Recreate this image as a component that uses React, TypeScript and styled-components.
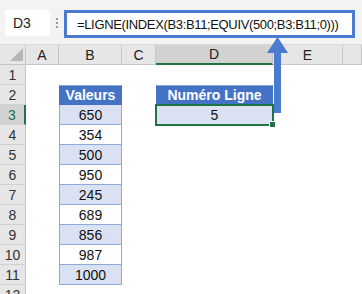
import React from 'react';
import styled, { createGlobalStyle } from 'styled-components';

const GlobalStyle = createGlobalStyle`
  html, body {
    margin: 0;
    padding: 0;
    background: #ffffff;
  }
`;

const BLUE = '#4472c4';
const ACCENT = '#4a7bcf';
const LIGHT = '#d9e1f2';
const TABLE_LINE = '#8eaadb';
const GREEN = '#217346';

const Screen = styled.div`
  position: relative;
  width: 362px;
  height: 294px;
  overflow: hidden;
  background: #ffffff;
  font-family: "Liberation Sans", Arial, sans-serif;
`;

const Toolbar = styled.div`
  height: 45px;
  box-sizing: border-box;
  background: #f3f3f3;
  display: flex;
  align-items: flex-start;
  padding: 10px 0 0 5px;
  border-bottom: 1px solid #dadada;
`;

const NameBox = styled.div`
  width: 45px;
  height: 26px;
  box-sizing: border-box;
  background: #ffffff;
  display: flex;
  align-items: center;
  padding-left: 8px;
  font-size: 14px;
  color: #222;
`;

const Dots = styled.div`
  width: 14px;
  height: 26px;
  display: flex;
  flex-direction: column;
  align-items: center;
  justify-content: center;
  gap: 2px;

  & span {
    width: 2px;
    height: 2px;
    background: #9a9a9a;
  }
`;

const FormulaBox = styled.div`
  width: 291px;
  height: 28px;
  box-sizing: border-box;
  background: #ffffff;
  border: 3px solid ${ACCENT};
  display: flex;
  align-items: center;
  padding-left: 10px;
  font-size: 13px;
  letter-spacing: -0.35px;
  color: #111;
  white-space: nowrap;
`;

const Sheet = styled.div`
  display: grid;
  grid-template-columns: 26px 33px 63px 34px 117px 70px 1fr;
  grid-auto-rows: 20px;
`;

const ColHeader = styled.div<{ active?: boolean }>`
  box-sizing: border-box;
  background: ${p => (p.active ? '#d2d2d2' : '#e6e6e6')};
  border-right: 1px solid #c6c6c6;
  border-bottom: ${p => (p.active ? `2px solid ${GREEN}` : '1px solid #c6c6c6')};
  display: flex;
  align-items: center;
  justify-content: center;
  font-size: 14px;
  color: #222;
`;

const Corner = styled.div`
  position: relative;
  box-sizing: border-box;
  background: #e6e6e6;
  border-right: 1px solid #c6c6c6;
  border-bottom: 1px solid #c6c6c6;

  &::after {
    content: '';
    position: absolute;
    right: 2px;
    bottom: 3px;
    width: 0;
    height: 0;
    border-left: 13px solid transparent;
    border-bottom: 13px solid #b7b7b7;
  }
`;

const RowHeader = styled.div<{ active?: boolean }>`
  box-sizing: border-box;
  background: ${p => (p.active ? '#d2d2d2' : '#e6e6e6')};
  border-right: ${p => (p.active ? `2px solid ${GREEN}` : '1px solid #c6c6c6')};
  border-bottom: 1px solid #d0d0d0;
  display: flex;
  align-items: center;
  justify-content: center;
  font-size: 14px;
  color: ${p => (p.active ? GREEN : '#333')};
`;

const Cell = styled.div`
  box-sizing: border-box;
  background: #ffffff;
`;

const TableCell = styled.div<{ kind: 'head' | 'band' | 'plain' }>`
  box-sizing: border-box;
  background: ${p => (p.kind === 'head' ? BLUE : p.kind === 'band' ? LIGHT : '#ffffff')};
  color: ${p => (p.kind === 'head' ? '#ffffff' : '#111')};
  font-weight: ${p => (p.kind === 'head' ? 700 : 400)};
  font-size: 14px;
  border-left: 1px solid ${p => (p.kind === 'head' ? BLUE : TABLE_LINE)};
  border-right: 1px solid ${p => (p.kind === 'head' ? BLUE : TABLE_LINE)};
  border-bottom: 1px solid ${p => (p.kind === 'head' ? BLUE : TABLE_LINE)};
  border-top: ${p => (p.kind === 'head' ? `1px solid ${TABLE_LINE}` : 'none')};
  display: flex;
  align-items: center;
  justify-content: center;
`;

const Selected = styled(TableCell)`
  position: relative;
  outline: 2px solid ${GREEN};
  outline-offset: -1px;

  &::after {
    content: '';
    position: absolute;
    right: -4px;
    bottom: -4px;
    width: 5px;
    height: 5px;
    background: ${GREEN};
    border: 1px solid #ffffff;
  }
`;

const Arrow = styled.svg`
  position: absolute;
  left: 266px;
  top: 36px;
`;

const values = ['650', '354', '500', '950', '245', '689', '856', '987', '1000'];
const columns = ['A', 'B', 'C', 'D', 'E', ''];

const App = () => {
  const rows = Array.from({ length: 12 }, (_, i) => i + 1);

  return (
    <Screen>
      <GlobalStyle />
      <Toolbar>
        <NameBox>D3</NameBox>
        <Dots><span /><span /><span /></Dots>
        <FormulaBox>=LIGNE(INDEX(B3:B11;EQUIV(500;B3:B11;0)))</FormulaBox>
      </Toolbar>
      <Sheet>
        <Corner />
        {columns.map(c => (
          <ColHeader key={c || 'F'} active={c === 'D'}>{c}</ColHeader>
        ))}
        {rows.map(r => {
          const v = r >= 3 && r <= 11 ? values[r - 3] : null;
          return (
            <React.Fragment key={r}>
              <RowHeader active={r === 3}>{r}</RowHeader>
              <Cell />
              {r === 2 && <TableCell kind="head">Valeurs</TableCell>}
              {v && <TableCell kind={r % 2 === 1 ? 'band' : 'plain'}>{v}</TableCell>}
              {r !== 2 && !v && <Cell />}
              <Cell />
              {r === 2 && <TableCell kind="head">Numéro Ligne</TableCell>}
              {r === 3 && <Selected kind="band">5</Selected>}
              {r !== 2 && r !== 3 && <Cell />}
              <Cell />
              <Cell />
            </React.Fragment>
          );
        })}
      </Sheet>
      <Arrow width="24" height="80" viewBox="0 0 24 80">
        <path d="M11.5 1 L22 17 L15 17 L15 77 L8 77 L8 17 L1 17 Z" fill={ACCENT} />
      </Arrow>
    </Screen>
  );
};

export default App;
